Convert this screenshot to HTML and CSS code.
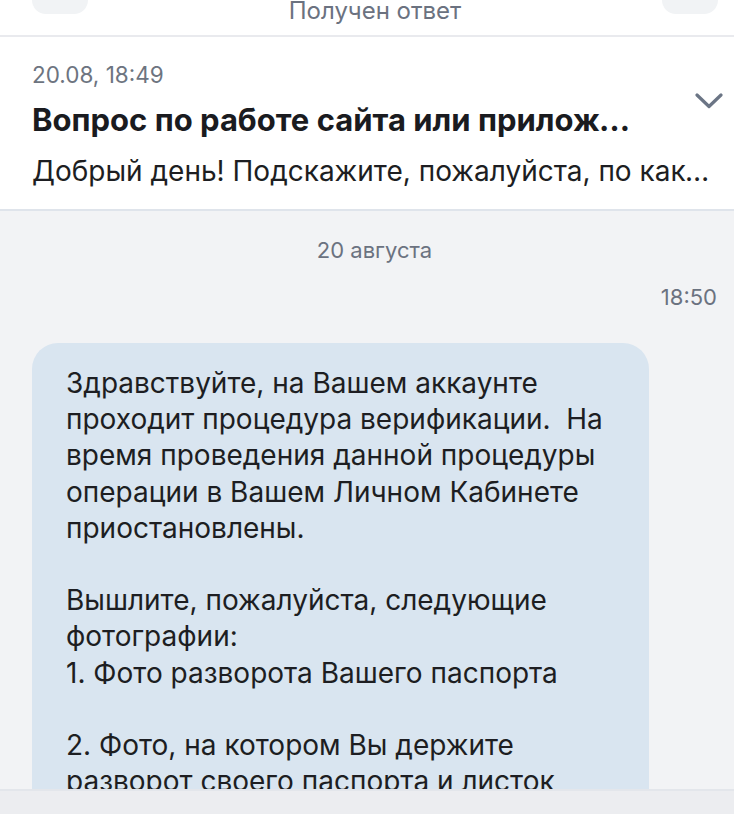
FILE: index.html
```html
<!DOCTYPE html>
<html lang="ru">
<head>
<meta charset="utf-8">
<title>Получен ответ</title>
<link rel="stylesheet" href="styles.css">
</head>
<body>
<div class="screen">
  <div class="topbar">
    <div class="pill"></div>
    <div class="topbar-title">Получен ответ</div>
    <div class="pill"></div>
  </div>
  <div class="header">
    <div class="date">20.08, 18:49</div>
    <svg class="chevron" width="28" height="16" viewBox="0 0 28 16" aria-hidden="true">
      <path d="M2 2 L14 13.5 L26 2" fill="none" stroke="#6b7585" stroke-width="3.2" stroke-linecap="round" stroke-linejoin="round"/>
    </svg>
    <div class="title">Вопрос по работе сайта или приложения</div>
    <div class="preview">Добрый день! Подскажите, пожалуйста, по какой причине заблокирован вывод средств?</div>
  </div>
  <div class="chat">
    <div class="day">20 августа</div>
    <div class="time">18:50</div>
    <div class="bubble"><p class="msg">Здравствуйте, на Вашем аккаунте
проходит процедура верификации.  На
время проведения данной процедуры
операции в Вашем Личном Кабинете
приостановлены.

Вышлите, пожалуйста, следующие
фотографии:
1. Фото разворота Вашего паспорта

2. Фото, на котором Вы держите
разворот своего паспорта и листок
бумаги с надписью</p></div>
  </div>
  <div class="bottombar"></div>
</div>
</body>
</html>
```

FILE: styles.css
```css
* { box-sizing: border-box; }
html, body { margin: 0; padding: 0; }
body {
  font-family: Inter, "Noto Sans", sans-serif;
  background: #ffffff;
  color: #1d1e22;
}
.screen {
  width: 734px;
  height: 814px;
  display: flex;
  flex-direction: column;
  overflow: hidden;
}
.topbar {
  height: 37px;
  flex: none;
  display: flex;
  justify-content: space-between;
  align-items: flex-start;
  padding: 0 16px 0 32px;
  border-bottom: 2px solid #e9eaee;
  background: #fff;
}
.pill {
  width: 56px;
  height: 14px;
  background: #f1f3f5;
  border-radius: 0 0 14px 14px;
}
.topbar-title {
  font-size: 24px;
  line-height: 22px;
  color: #6b7280;
}
.header {
  flex: none;
  display: grid;
  grid-template-columns: minmax(0, 1fr) 28px;
  grid-template-rows: 30px 52px auto;
  column-gap: 20px;
  align-content: start;
  padding: 23px 16px 0 32px;
  height: 174px;
  border-bottom: 2px solid #dfe4eb;
  background: #fff;
}
.date {
  grid-column: 1;
  grid-row: 1;
  font-size: 22.5px;
  line-height: 30px;
  color: #6d7480;
}
.chevron {
  grid-column: 2;
  grid-row: 1 / 3;
  margin-top: 33px;
  margin-left: 5px;
}
.title {
  grid-column: 1;
  grid-row: 2;
  font-size: 31px;
  font-weight: 700;
  line-height: 40px;
  margin-top: 10px;
  margin-right: 25px;
  white-space: nowrap;
  overflow: hidden;
  text-overflow: ellipsis;
  color: #1a1b1f;
}
.preview {
  grid-column: 1 / 3;
  grid-row: 3;
  font-size: 28px;
  line-height: 40px;
  margin-top: 9px;
  white-space: nowrap;
  overflow: hidden;
  text-overflow: ellipsis;
}
.chat {
  flex: 1;
  min-height: 0;
  overflow: hidden;
  background: #f2f3f5;
  display: flex;
  flex-direction: column;
  padding: 26px 17px 0 32px;
}
.day {
  text-align: center;
  font-size: 22px;
  line-height: 26px;
  color: #6b7280;
}
.time {
  text-align: right;
  font-size: 22px;
  line-height: 26px;
  color: #6b7280;
  margin-top: 21px;
}
.bubble {
  margin-top: 33px;
  width: 617px;
  flex: none;
  background: #d9e5f0;
  border-radius: 26px;
  padding: 22px 16px 40px 34px;
}
.msg {
  margin: 0;
  white-space: pre-wrap;
  font-size: 28px;
  line-height: 36.2px;
  color: #1d1e22;
}
.bottombar {
  flex: none;
  height: 25px;
  background: #ecedf0;
  border-top: 2px solid #e3e6eb;
}
```
